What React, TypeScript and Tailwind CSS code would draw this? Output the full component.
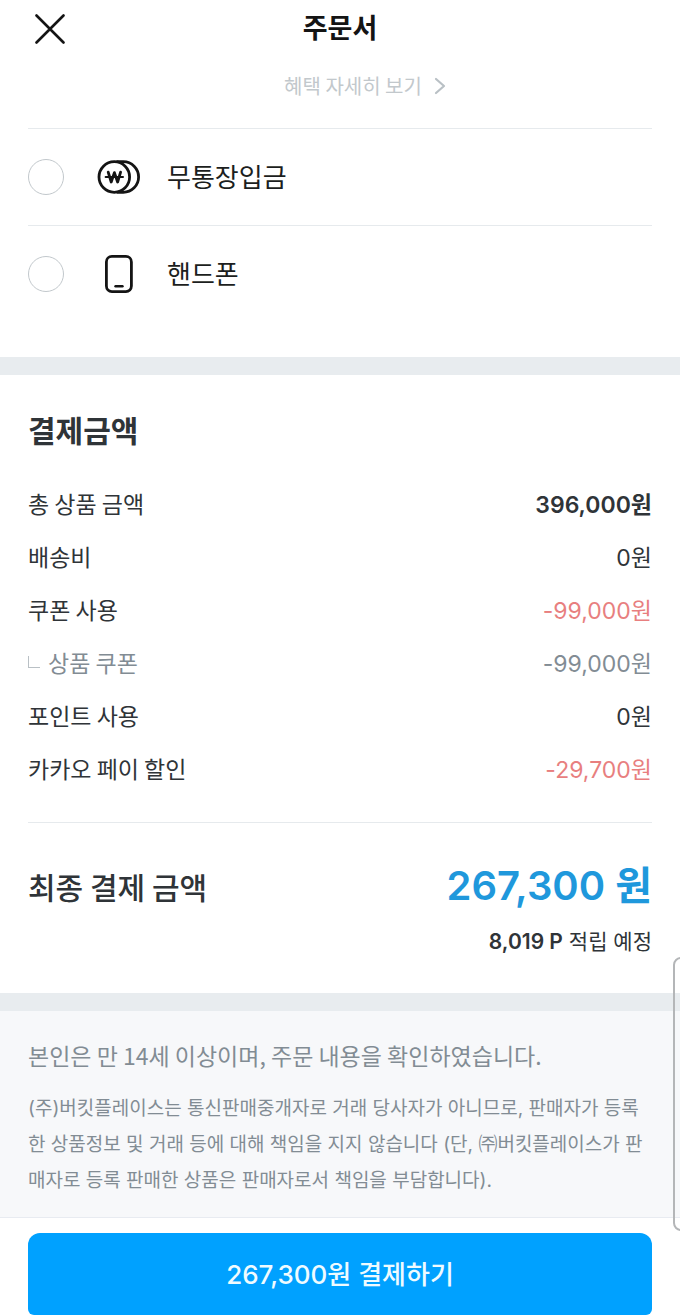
import React, { useState } from "react";

interface AmountRow {
  label: string;
  value: string;
  tone?: "bold" | "discount" | "sub";
}

const amountRows: AmountRow[] = [
  { label: "총 상품 금액", value: "396,000원", tone: "bold" },
  { label: "배송비", value: "0원" },
  { label: "쿠폰 사용", value: "-99,000원", tone: "discount" },
  { label: "상품 쿠폰", value: "-99,000원", tone: "sub" },
  { label: "포인트 사용", value: "0원" },
  { label: "카카오 페이 할인", value: "-29,700원", tone: "discount" },
];

const valueStyles = {
  bold: "font-semibold text-[#2f3438]",
  discount: "text-[#e87f7f]",
  sub: "text-[#828c94]",
  normal: "text-[#2f3438]",
};

const CoinIcon = () => (
  <svg width="44" height="36" viewBox="0 0 44 36" fill="none" stroke="#141414" strokeWidth="2.8" strokeLinecap="round" strokeLinejoin="round">
    <circle cx="17.3" cy="18" r="15.3" />
    <path d="M20.5 2.7h5.8a15.3 15.3 0 0 1 0 30.6h-5.8" />
    <path d="M11.2 13.2l3 9.8 3.2-9.4 3.2 9.4 3-9.8" />
    <path d="M8.6 18h17.4" strokeWidth="2" />
  </svg>
);

const PhoneIcon = () => (
  <svg width="44" height="40" viewBox="0 0 44 40" fill="none" stroke="#141414" strokeWidth="2.8" strokeLinecap="round">
    <rect x="9.4" y="2.4" width="25" height="35.2" rx="5.5" />
    <path d="M18.5 32.2h7" strokeWidth="2.4" />
  </svg>
);

const methods = [
  { id: "bank", label: "무통장입금", icon: <CoinIcon /> },
  { id: "phone", label: "핸드폰", icon: <PhoneIcon /> },
];

const App: React.FC = () => {
  const [method, setMethod] = useState("");

  return (
    <div className="relative overflow-hidden bg-white text-[#2f3438] font-['Inter','Noto_Sans_CJK_KR',sans-serif]">
      {/* Header */}
      <header className="grid h-[58px] grid-cols-[44px_1fr_44px] items-center px-7">
        <button type="button" aria-label="닫기" className="flex h-11 w-11 items-center justify-center">
          <svg width="30" height="30" viewBox="0 0 30 30" fill="none" stroke="#141414" strokeWidth="2.6" strokeLinecap="round">
            <path d="M1.5 1.5l27 27M28.5 1.5l-27 27" />
          </svg>
        </button>
        <h1 className="text-center text-[27px] font-bold text-[#141414]">주문서</h1>
      </header>

      {/* Payment methods */}
      <section className="px-7 pb-[35px]">
        <div className="flex h-[70px] justify-center pt-3 pl-[50px]">
          <a href="#" className="flex h-8 items-center gap-3 font-['Noto_Sans_CJK_KR',sans-serif] text-[20px] text-[#c2c8cc]">
            혜택 자세히 보기
            <svg width="12" height="18" viewBox="0 0 12 18" fill="none" stroke="#b9c0c5" strokeWidth="2.2" strokeLinecap="round" strokeLinejoin="round">
              <path d="M2 2l8 7-8 7" />
            </svg>
          </a>
        </div>
        {methods.map((m) => (
          <label key={m.id} htmlFor={m.id} className="flex h-[97px] items-center border-t border-[#e6eaed] text-[26px] text-[#1c1e20]">
            <input
              id={m.id}
              type="radio"
              name="method"
              checked={method === m.id}
              onChange={() => setMethod(m.id)}
              className="h-9 w-9 appearance-none rounded-full border border-[#c2c8cc] bg-white checked:border-[10px] checked:border-[#00a1ff]"
            />
            <span className="ml-[33px] mr-[26px]">{m.icon}</span>
            {m.label}
          </label>
        ))}
      </section>

      {/* Amounts */}
      <section className="border-t-[18px] border-[#e8ecef] px-7 pt-9 pb-[35px]">
        <h2 className="text-[30px] leading-10 font-bold">결제금액</h2>
        <dl className="mt-[26px] border-b border-[#e6eaed] pb-[27px] text-[23px] leading-[53px]">
          {amountRows.map((row) => (
            <div key={row.label} className="flex h-[53px] items-baseline justify-between">
              <dt className={`font-['Noto_Sans_CJK_KR',sans-serif] ${row.tone === "sub" ? "text-[#828c94]" : ""}`}>
                {row.tone === "sub" && (
                  <span className="mr-2 mb-1 inline-block h-3 w-3 border-b border-l border-[#b9c0c5] align-baseline" />
                )}
                {row.label}
              </dt>
              <dd className={valueStyles[row.tone ?? "normal"]}>{row.value}</dd>
            </div>
          ))}
        </dl>

        <div className="mt-[33px] flex h-[60px] items-center justify-between">
          <h3 className="font-['Noto_Sans_CJK_KR',sans-serif] text-[30px] leading-10 font-medium">최종 결제 금액</h3>
          <strong className="text-[40px] font-semibold text-[#1f98dc]">267,300 원</strong>
        </div>
        <p className="mt-[10px] text-right text-[21px] leading-8">
          <b className="font-semibold">8,019 P</b> 적립 예정
        </p>
      </section>

      {/* Notice */}
      <section className="border-t-[18px] border-[#e8ecef] bg-[#f7f8fa] px-7 pt-[26px] pb-[18px] text-[#828c94]">
        <p className="font-['Noto_Sans_CJK_KR',sans-serif] text-[23px] leading-9">
          본인은 만 14세 이상이며, 주문 내용을 확인하였습니다.
        </p>
        <p className="mt-[18px] text-[19px] leading-9">
          (주)버킷플레이스는 통신판매중개자로 거래 당사자가 아니므로, 판매자가 등록한 상품정보 및 거래 등에 대해 책임을 지지 않습니다 (단, ㈜버킷플레이스가 판매자로 등록 판매한 상품은 판매자로서 책임을 부담합니다).
        </p>
      </section>

      {/* Pay button */}
      <footer className="border-t border-[#e8ebf1] px-7 pt-[15px]">
        <button
          type="button"
          className="h-[82px] w-full rounded-t-xl rounded-b-md bg-[#00a1ff] text-[26px] font-medium text-[#effbff]"
        >
          267,300원 결제하기
        </button>
      </footer>

      {/* Edge panel handle */}
      <div className="absolute -right-3 bottom-[84px] h-[274px] w-[19px] rounded-lg border-2 border-[#b4b6b8]" />
    </div>
  );
};

export default App;
